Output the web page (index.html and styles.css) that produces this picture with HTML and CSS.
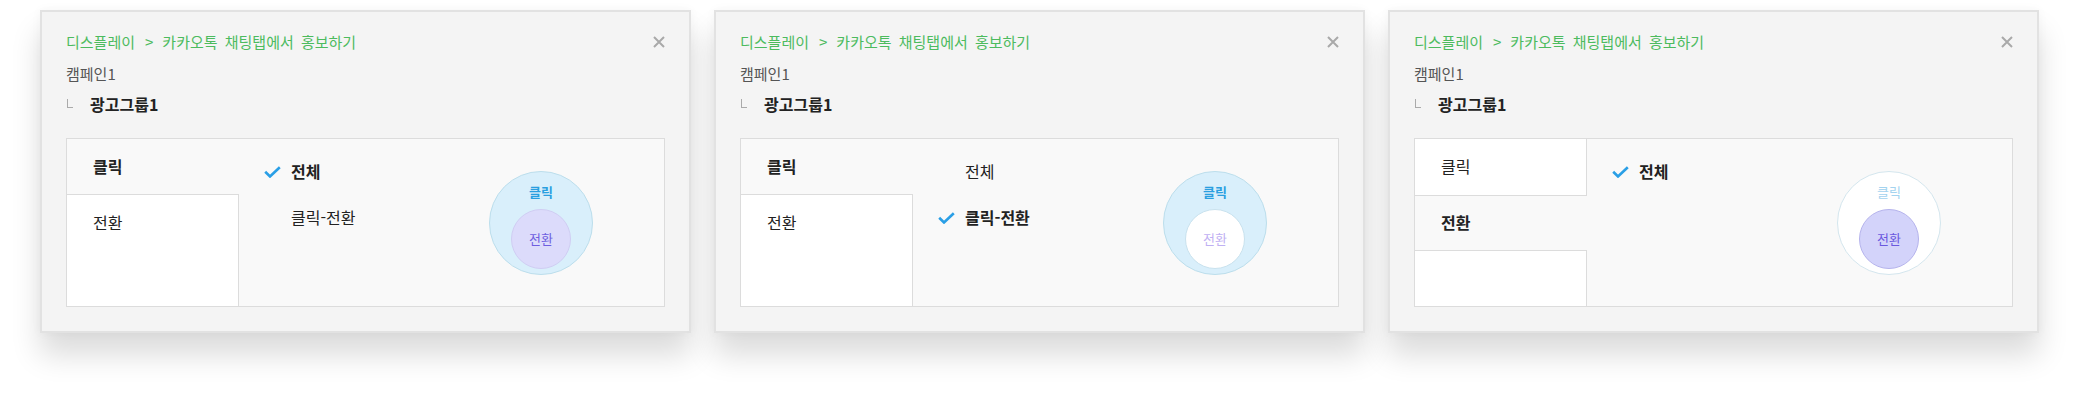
FILE: index.html
```html
<!DOCTYPE html>
<html lang="ko">
<head>
<meta charset="utf-8">
<link rel="stylesheet" href="styles.css">
</head>
<body>
<div class="row">

  <section class="card">
    <div class="head">
      <div class="crumb">디스플레이<span class="sep">&gt;</span>카카오톡 채팅탭에서 홍보하기</div>
      <span class="close"><svg viewBox="0 0 12 12" width="12" height="12"><path d="M1 1L11 11M11 1L1 11" stroke="#a9a9a9" stroke-width="2" fill="none"/></svg></span>
    </div>
    <div class="camp">캠페인1</div>
    <div class="group"><span class="corner"></span>광고그룹1</div>
    <div class="box">
      <div class="tabs">
        <div class="tab sel first">클릭</div>
        <div class="tab">전환</div>
        <div class="fill"></div>
      </div>
      <div class="panel">
        <div class="opts">
          <div class="opt on"><svg class="chk" viewBox="0 0 17 12" width="17" height="12"><path d="M1.2 5.8L6 10.5L15.8 1.2" stroke="#2a9fe6" stroke-width="2.6" fill="none"/></svg>전체</div>
          <div class="opt"><svg class="chk hid" viewBox="0 0 17 12" width="17" height="12"><path d="M1.2 5.8L6 10.5L15.8 1.2" stroke="#2a9fe6" stroke-width="2.6" fill="none"/></svg>클릭-전환</div>
        </div>
        <div class="venn v1">
          <span class="lbl-out">클릭</span>
          <span class="inner"><span class="lbl-in">전환</span></span>
        </div>
      </div>
    </div>
  </section>

  <section class="card">
    <div class="head">
      <div class="crumb">디스플레이<span class="sep">&gt;</span>카카오톡 채팅탭에서 홍보하기</div>
      <span class="close"><svg viewBox="0 0 12 12" width="12" height="12"><path d="M1 1L11 11M11 1L1 11" stroke="#a9a9a9" stroke-width="2" fill="none"/></svg></span>
    </div>
    <div class="camp">캠페인1</div>
    <div class="group"><span class="corner"></span>광고그룹1</div>
    <div class="box">
      <div class="tabs">
        <div class="tab sel first">클릭</div>
        <div class="tab">전환</div>
        <div class="fill"></div>
      </div>
      <div class="panel">
        <div class="opts">
          <div class="opt"><svg class="chk hid" viewBox="0 0 17 12" width="17" height="12"><path d="M1.2 5.8L6 10.5L15.8 1.2" stroke="#2a9fe6" stroke-width="2.6" fill="none"/></svg>전체</div>
          <div class="opt on"><svg class="chk" viewBox="0 0 17 12" width="17" height="12"><path d="M1.2 5.8L6 10.5L15.8 1.2" stroke="#2a9fe6" stroke-width="2.6" fill="none"/></svg>클릭-전환</div>
        </div>
        <div class="venn v2">
          <span class="lbl-out">클릭</span>
          <span class="inner"><span class="lbl-in">전환</span></span>
        </div>
      </div>
    </div>
  </section>

  <section class="card">
    <div class="head">
      <div class="crumb">디스플레이<span class="sep">&gt;</span>카카오톡 채팅탭에서 홍보하기</div>
      <span class="close"><svg viewBox="0 0 12 12" width="12" height="12"><path d="M1 1L11 11M11 1L1 11" stroke="#a9a9a9" stroke-width="2" fill="none"/></svg></span>
    </div>
    <div class="camp">캠페인1</div>
    <div class="group"><span class="corner"></span>광고그룹1</div>
    <div class="box">
      <div class="tabs">
        <div class="tab first">클릭</div>
        <div class="tab sel">전환</div>
        <div class="fill"></div>
      </div>
      <div class="panel">
        <div class="opts">
          <div class="opt on"><svg class="chk" viewBox="0 0 17 12" width="17" height="12"><path d="M1.2 5.8L6 10.5L15.8 1.2" stroke="#2a9fe6" stroke-width="2.6" fill="none"/></svg>전체</div>
        </div>
        <div class="venn v3">
          <span class="lbl-out">클릭</span>
          <span class="inner"><span class="lbl-in">전환</span></span>
        </div>
      </div>
    </div>
  </section>

</div>
</body>
</html>
```
FILE: styles.css
```css
* { box-sizing: border-box; }
html, body { margin: 0; padding: 0; background: #fff; }
body {
  font-family: "Noto Sans CJK KR", "Noto Sans", sans-serif;
  color: #222;
  width: 2080px;
  height: 405px;
  overflow: hidden;
}
.row {
  display: flex;
  gap: 23px;
  padding: 10px 0 0 40px;
}
.card {
  width: 651px;
  height: 323px;
  background: #f4f4f4;
  border: 2px solid #e2e2e2;
  padding: 20px 24px 0 24px;
  box-shadow: 0 22px 28px rgba(0,0,0,0.14), 0 0 10px rgba(0,0,0,0.04);
}
.head {
  display: flex;
  justify-content: space-between;
  align-items: center;
  height: 20px;
}
.crumb {
  font-size: 15px;
  line-height: 20px;
  color: #4cbb5e;
  word-spacing: 3px;
}
.sep { margin: 0 9px 0 10px; }
.close {
  width: 12px;
  height: 12px;
  display: block;
}
.close svg { display: block; }
.camp {
  margin-top: 12px;
  font-size: 15px;
  line-height: 20px;
  color: #555;
}
.group {
  margin-top: 10px;
  font-size: 16px;
  line-height: 20px;
  font-weight: 700;
  color: #222;
  display: flex;
  align-items: center;
}
.corner {
  width: 6px;
  height: 9px;
  border-left: 1px solid #aaa;
  border-bottom: 1px solid #aaa;
  margin: -1px 17px 0 1px;
}
.box {
  margin-top: 24px;
  height: 169px;
  border: 1px solid #dcdcdc;
  background: #f9f9f9;
  display: flex;
}
.tabs {
  width: 172px;
  display: flex;
  flex-direction: column;
}
.tab {
  height: 56px;
  padding: 0 0 2px 26px;
  display: flex;
  align-items: center;
  font-size: 16px;
  color: #222;
  background: #fff;
  border-right: 1px solid #dcdcdc;
}
.tab.sel {
  background: #f9f9f9;
  border-right: none;
  border-top: 1px solid #dcdcdc;
  border-bottom: 1px solid #dcdcdc;
  font-weight: 700;
}
.tab.sel.first { border-top: none; }
.fill {
  flex: 1;
  background: #fff;
  border-right: 1px solid #dcdcdc;
}
.panel {
  flex: 1;
  display: flex;
  align-items: center;
}
.opts {
  flex: 1;
  align-self: flex-start;
  padding: 9px 0 0 25px;
}
.opt {
  height: 46px;
  display: flex;
  align-items: center;
  font-size: 16px;
  color: #222;
}
.opt.on { font-weight: 700; }
.chk { display: block; margin-right: 10px; margin-top: 2px; }
.chk.hid { visibility: hidden; }
.venn {
  width: 104px;
  height: 104px;
  border-radius: 50%;
  margin-right: 71px;
  display: flex;
  flex-direction: column;
  align-items: center;
  padding-top: 12px;
  border: 1px solid #bcdeec;
  background: #d9effb;
}
.lbl-out {
  font-size: 13px;
  line-height: 16px;
  font-weight: 700;
  color: #2a9fe0;
}
.inner {
  margin-top: 9px;
  width: 60px;
  height: 60px;
  border-radius: 50%;
  display: flex;
  align-items: center;
  justify-content: center;
  background: #dcdbfb;
  border: 1px solid #d0cdf3;
}
.lbl-in {
  font-size: 13px;
  line-height: 16px;
  color: #6e5ee0;
}
.v2 .inner { background: #fff; border-color: #c9e2ee; }
.v2 .lbl-in { color: #bfb0f3; }
.v3 { background: #fff; border-color: #d4e6ee; }
.v3 .lbl-out { color: #a3d3ef; font-weight: 400; }
.v3 .inner { background: #d3d3fa; border-color: #b5b3ec; }
.v3 .lbl-in { color: #6a58df; }
```
